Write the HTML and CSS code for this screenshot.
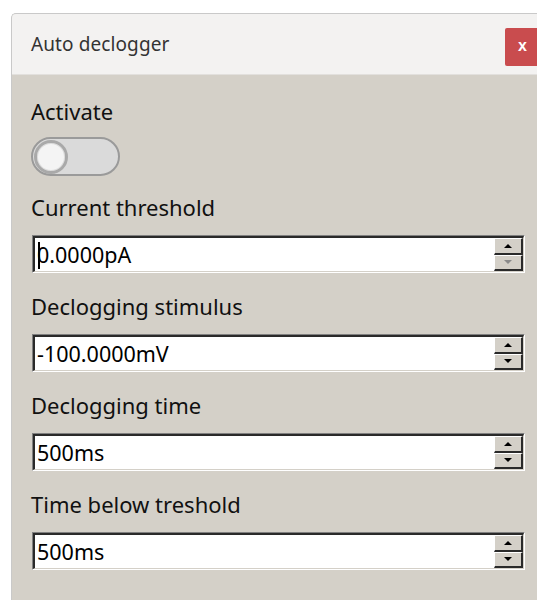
FILE: index.html
```html
<!DOCTYPE html>
<html lang="en">
<head>
<meta charset="utf-8">
<title>Auto declogger</title>
<link rel="stylesheet" href="styles.css">
</head>
<body>
<div class="desk">
  <div class="window">
    <div class="titlebar">
      <span class="title">Auto declogger</span>
      <button class="close" type="button">x</button>
    </div>
    <div class="panel">
      <div class="field">
        <div class="label">Activate</div>
        <div class="toggle"><span class="knob"></span></div>
      </div>
      <div class="field">
        <div class="label">Current threshold</div>
        <div class="spin">
          <div class="spin-inner">
            <div class="value"><span class="caret"></span>0.0000pA</div>
            <div class="arrows">
              <span class="btn"><span class="tri up"></span></span>
              <span class="btn"><span class="tri down off"></span></span>
            </div>
          </div>
        </div>
      </div>
      <div class="field">
        <div class="label">Declogging stimulus</div>
        <div class="spin">
          <div class="spin-inner">
            <div class="value">-100.0000mV</div>
            <div class="arrows">
              <span class="btn"><span class="tri up"></span></span>
              <span class="btn"><span class="tri down"></span></span>
            </div>
          </div>
        </div>
      </div>
      <div class="field">
        <div class="label">Declogging time</div>
        <div class="spin">
          <div class="spin-inner">
            <div class="value">500ms</div>
            <div class="arrows">
              <span class="btn"><span class="tri up"></span></span>
              <span class="btn"><span class="tri down"></span></span>
            </div>
          </div>
        </div>
      </div>
      <div class="field">
        <div class="label">Time below treshold</div>
        <div class="spin">
          <div class="spin-inner">
            <div class="value">500ms</div>
            <div class="arrows">
              <span class="btn"><span class="tri up"></span></span>
              <span class="btn"><span class="tri down"></span></span>
            </div>
          </div>
        </div>
      </div>
    </div>
  </div>
</div>
</body>
</html>
```
FILE: styles.css
```css
html, body {
  margin: 0;
  padding: 0;
  background: #ffffff;
  height: 100%;
  overflow: hidden;
}

* {
  box-sizing: border-box;
}

.desk {
  padding: 13px 0 0 11px;
  font-family: "Noto Sans", "Open Sans", sans-serif;
}

.window {
  border: 1px solid #c9c9c9;
  border-right: none;
  border-bottom: none;
  border-top-left-radius: 5px;
  background: #d4d0c8;
  height: 620px;
  overflow: hidden;
}

.titlebar {
  height: 61px;
  background: #f3f2f1;
  border-bottom: 1px solid #e2e0dd;
  display: flex;
  align-items: center;
  justify-content: space-between;
  padding-left: 19px;
}

.title {
  font-size: 19px;
  color: #333333;
  letter-spacing: 0.1px;
}

.close {
  width: 32px;
  height: 38px;
  border: none;
  border-radius: 2px 0 0 2px;
  background: #c94c4e;
  color: #ffffff;
  font-family: "Liberation Sans", sans-serif;
  font-size: 16px;
  font-weight: bold;
  padding: 0 0 2px 13px;
  text-align: left;
  margin-top: 6px;
}

.panel {
  display: flex;
  flex-direction: column;
  padding: 23px 12px 0 19px;
  gap: 20px;
}

.field {
  display: flex;
  flex-direction: column;
  gap: 15px;
}

.label {
  font-size: 22px;
  line-height: 26px;
  color: #111111;
}

.toggle {
  width: 89px;
  height: 39px;
  border: 2px solid #9a9a9a;
  border-radius: 20px;
  background: #dadada;
  display: flex;
  align-items: center;
  padding-left: 1px;
  margin: -2px 0 -2px 0;
}

.knob {
  width: 34px;
  height: 34px;
  border-radius: 50%;
  border: 3px solid #a9a9a9;
  background: #f4f4f4;
  box-shadow: inset 0 0 0 1px #dcdcdc;
}

.spin {
  height: 38px;
  border-top: 1px solid #808080;
  border-left: 1px solid #808080;
  border-right: 1px solid #ffffff;
  border-bottom: 1px solid #ffffff;
  margin-left: 1px;
}

.spin-inner {
  height: 100%;
  border-top: 2px solid #2a2a2a;
  border-left: 2px solid #2a2a2a;
  border-right: 1px solid #d4d0c8;
  border-bottom: 1px solid #d4d0c8;
  background: #ffffff;
  display: flex;
  align-items: stretch;
}

.value {
  flex: 1;
  display: flex;
  align-items: center;
  padding-left: 2px;
  font-size: 21.5px;
  color: #000000;
  position: relative;
}

.caret {
  position: absolute;
  left: 3px;
  top: 4px;
  width: 2px;
  height: 27px;
  background: #000000;
}

.arrows {
  width: 29px;
  display: flex;
  flex-direction: column;
}

.btn {
  flex: 1;
  background: #d4d0c8;
  border-top: 1px solid #ffffff;
  border-left: 1px solid #ffffff;
  border-right: 2px solid #2a2a2a;
  border-bottom: 2px solid #2a2a2a;
  display: flex;
  align-items: center;
  justify-content: center;
}

.tri {
  width: 0;
  height: 0;
  border-left: 4px solid transparent;
  border-right: 4px solid transparent;
}

.tri.up {
  border-bottom: 4px solid #000000;
}

.tri.down {
  border-top: 4px solid #000000;
}

.tri.down.off {
  border-top-color: #8a8a8a;
}
```
